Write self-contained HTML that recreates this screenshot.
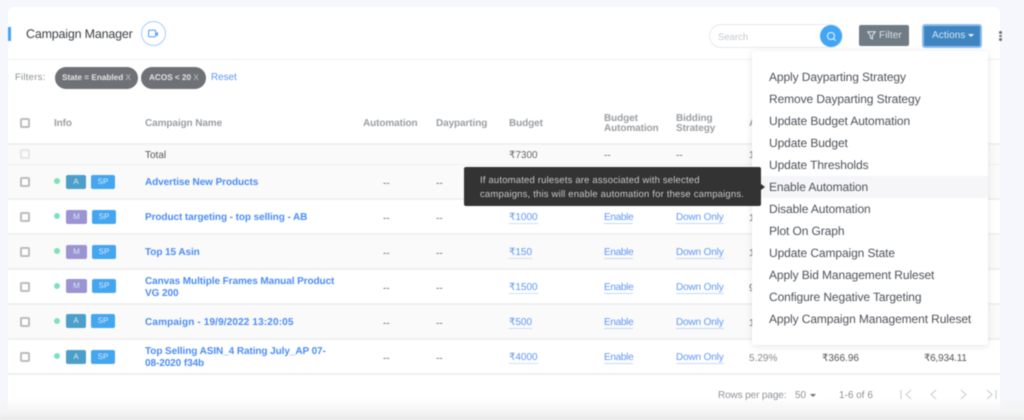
<!DOCTYPE html>
<html><head><meta charset="utf-8">
<style>
html,body{margin:0;padding:0;width:1024px;height:420px;overflow:hidden;background:#f6f7fc;font-family:"Liberation Sans",sans-serif;text-rendering:geometricPrecision}
#w{position:relative;width:1024px;height:420px;overflow:hidden;filter:blur(.4px)}
#w div,#w span.t{position:absolute;box-sizing:border-box}
.t{white-space:nowrap;line-height:14px;height:14px}
.h{font-size:10px;font-weight:bold;color:#9a9ea3;margin-top:2px;letter-spacing:-.1px}
.d{font-size:10px;color:#666;margin-top:2px}
.n{font-size:10px;font-weight:bold;color:#4a8cf5;margin-top:2px;letter-spacing:-.08px}
.l{font-size:10px;color:#5f97f5;line-height:12px!important;height:12px!important;margin-top:1px;border-bottom:1px dotted #9fc3f8}
.e{border-bottom:1px solid #c3dafa}
.en{letter-spacing:-.3px}
.c{width:10px;height:10px;border:2px solid #bcbcbc;border-radius:2px;left:20px;background:#fff;margin-top:-.5px}
.r{left:8px;width:992px;height:35px;border-bottom:2px solid #f0f0f0}
.g{background:#fafafa}
.dot{left:54px;width:6px;height:6px;border-radius:50%;background:#7ce3b9}
.b{height:14px;border-radius:2px;color:#d9e6f5;font-size:8px;line-height:14px;text-align:center}
.A{left:66px;width:20px;background:#4b9fc9}
.M{left:66px;width:21px;background:#9a94d2}
.S{left:91px;width:24px;background:#45a6f0}
.S2{left:92px}
.m{left:769px;font-size:12px;color:#4d5258;letter-spacing:-.1px;margin-top:-.5px}
.f{font-size:10px;color:#8e9297;margin-top:1px}
</style></head><body><div id="w">

<div style="left:8px;top:7px;width:992px;height:410px;background:#fff;border-radius:5px 5px 0 0"></div>
<div style="left:0;top:398px;width:1024px;height:22px;background:linear-gradient(to bottom,rgba(240,240,240,0),#f3f3f3 70%,#e9e9e9)"></div>

<div style="left:8px;top:27px;width:3px;height:14px;background:#45a6f5"></div>
<span class="t" style="left:26px;top:27px;font-size:12.500px;color:#3c4044;letter-spacing:-.2px">Campaign Manager</span>
<div style="left:141px;top:21px;width:25px;height:25px;border:1px solid #a8cdfa;border-radius:50%"></div>
<svg style="position:absolute;left:148px;top:29px" width="11" height="10" viewBox="0 0 11 10"><rect x=".6" y="1.2" width="7" height="6.6" rx="1" fill="none" stroke="#5ba5f5" stroke-width="1.1"/><path d="M8 4l2-1.2v4.400L8 6z" fill="#5ba5f5"/></svg>

<!-- search -->
<div style="left:709px;top:24px;width:134px;height:24px;border:1px solid #e7e9ee;border-radius:12px;background:#fff"></div>
<span class="t" style="left:718px;top:29px;font-size:9.500px;color:#c5c8cc;margin-top:2px">Search</span>
<div style="left:820px;top:25px;width:22px;height:22px;border-radius:50%;background:#42a5f5"></div>
<svg style="position:absolute;left:826px;top:31px" width="11" height="11" viewBox="0 0 11 11"><circle cx="5" cy="5" r="3.500" fill="none" stroke="#e6f3fe" stroke-width="1.100"/><path d="M7.600 7.600l2 2" stroke="#e6f3fe" stroke-width="1.100"/></svg>

<!-- Filter -->
<div style="left:859px;top:25px;width:50px;height:21px;background:#6f7b85;border-radius:2px"></div>
<svg style="position:absolute;left:867px;top:31px" width="9" height="9" viewBox="0 0 9 9"><path d="M.7.8h7.600L5.500 4.400v3.500l-2-1V4.400z" fill="none" stroke="#e4e7ea" stroke-width="1"/></svg>
<span class="t" style="left:879px;top:29px;font-size:10px;color:#dfe3e6;letter-spacing:.1px">Filter</span>

<!-- Actions -->
<div style="left:922px;top:24px;width:60px;height:24px;background:#3f85c1;border:2px solid #8dbdf3;border-radius:3px"></div>
<span class="t" style="left:932px;top:29px;font-size:10px;color:#d8e7f5;letter-spacing:.1px">Actions</span>
<div style="left:968px;top:34px;width:0;height:0;border-left:3px solid transparent;border-right:3px solid transparent;border-top:3px solid #eef5fb"></div>

<!-- kebab -->
<div style="left:999px;top:31px;width:3px;height:2.500px;background:#6a6d70;border-radius:50%"></div>
<div style="left:999px;top:34.500px;width:3px;height:2.500px;background:#6a6d70;border-radius:50%"></div>
<div style="left:999px;top:38px;width:3px;height:2.500px;background:#6a6d70;border-radius:50%"></div>

<div style="left:8px;top:59px;width:992px;height:1px;background:#f1f1f3"></div>

<!-- filters -->
<span class="t" style="left:15px;top:71px;font-size:9.500px;color:#8c9095;letter-spacing:.25px">Filters:</span>
<div style="left:55px;top:67px;width:83px;height:22px;border-radius:11px;background:#6e7276"></div>
<span class="t" style="left:62px;top:71px;font-size:8.200px;font-weight:bold;color:#e2e3e4">State = Enabled <span style="font-weight:normal;color:#c5c6c8">X</span></span>
<div style="left:141px;top:67px;width:65px;height:22px;border-radius:11px;background:#6e7276"></div>
<span class="t" style="left:149px;top:71px;font-size:8.200px;font-weight:bold;color:#e2e3e4">ACOS &lt; 20 <span style="font-weight:normal;color:#c5c6c8">X</span></span>
<span class="t" style="left:211px;top:71px;font-size:10px;color:#5f97f5;letter-spacing:-.1px">Reset</span>

<!-- table header -->
<div class="c" style="top:118px"></div>
<span class="t h" style="left:54px;top:115px">Info</span>
<span class="t h" style="left:145px;top:115px">Campaign Name</span>
<span class="t h" style="left:363px;top:115px">Automation</span>
<span class="t h" style="left:436px;top:115px">Dayparting</span>
<span class="t h" style="left:509px;top:115px">Budget</span>
<span class="t h" style="left:604px;top:110px">Budget</span>
<span class="t h" style="left:604px;top:120px">Automation</span>
<span class="t h" style="left:676px;top:110px">Bidding</span>
<span class="t h" style="left:676px;top:120px">Strategy</span>
<span class="t h" style="left:749px;top:115px">ACOS</span>

<!-- rows -->
<div style="left:8px;top:143px;width:992px;height:23px;background:#fafafa;border-top:2px solid #f0f0f0;border-bottom:2px solid #f0f0f0"></div>
<div class="r g" style="top:165px"></div>
<div class="r" style="top:200px"></div>
<div class="r g" style="top:235px"></div>
<div class="r" style="top:270px"></div>
<div class="r g" style="top:305px"></div>
<div class="r" style="top:340px"></div>

<!-- total -->
<div class="c" style="top:149px;border-color:#e6e6e6;background:#fafafa"></div>
<span class="t d" style="left:145px;top:147px;color:#555">Total</span>
<span class="t d" style="left:509px;top:147px">₹7300</span>
<span class="t d" style="left:604px;top:147px">--</span>
<span class="t d" style="left:676px;top:147px">--</span>
<span class="t d" style="left:749px;top:147px">1</span>

<!-- row1 -->
<div class="c" style="top:177px"></div><div class="dot" style="top:178px"></div>
<div class="b A" style="top:175px">A</div><div class="b S" style="top:175px">SP</div>
<span class="t n" style="left:145px;top:174px">Advertise New Products</span>
<span class="t d" style="left:383px;top:175px">--</span><span class="t d" style="left:436px;top:175px">--</span>
<span class="t d" style="left:749px;top:175px">1</span>

<!-- row2 -->
<div class="c" style="top:212px"></div><div class="dot" style="top:213px"></div>
<div class="b M" style="top:210px">M</div><div class="b S S2" style="top:210px">SP</div>
<span class="t n" style="left:145px;top:209px">Product targeting - top selling - AB</span>
<span class="t d" style="left:383px;top:210px">--</span><span class="t d" style="left:436px;top:210px">--</span>
<span class="t l" style="left:509px;top:211px">₹1000</span>
<span class="t l e en" style="left:604px;top:211px">Enable</span>
<span class="t l e" style="left:676px;top:211px;letter-spacing:-.15px">Down Only</span>
<span class="t d" style="left:749px;top:210px">1</span>

<!-- row3 -->
<div class="c" style="top:247px"></div><div class="dot" style="top:248px"></div>
<div class="b M" style="top:245px">M</div><div class="b S S2" style="top:245px">SP</div>
<span class="t n" style="left:145px;top:244px">Top 15 Asin</span>
<span class="t d" style="left:383px;top:245px">--</span><span class="t d" style="left:436px;top:245px">--</span>
<span class="t l" style="left:509px;top:246px">₹150</span>
<span class="t l e en" style="left:604px;top:246px">Enable</span>
<span class="t l e" style="left:676px;top:246px;letter-spacing:-.15px">Down Only</span>
<span class="t d" style="left:749px;top:245px">1</span>

<!-- row4 -->
<div class="c" style="top:282px"></div><div class="dot" style="top:283px"></div>
<div class="b M" style="top:279px">M</div><div class="b S S2" style="top:279px">SP</div>
<span class="t n" style="left:145px;top:273px">Canvas Multiple Frames Manual Product</span>
<span class="t n" style="left:145px;top:285px">VG 200</span>
<span class="t d" style="left:383px;top:280px">--</span><span class="t d" style="left:436px;top:280px">--</span>
<span class="t l" style="left:509px;top:281px">₹1500</span>
<span class="t l e en" style="left:604px;top:281px">Enable</span>
<span class="t l e" style="left:676px;top:281px;letter-spacing:-.15px">Down Only</span>
<span class="t d" style="left:749px;top:280px">9</span>

<!-- row5 -->
<div class="c" style="top:317px"></div><div class="dot" style="top:318px"></div>
<div class="b A" style="top:314px">A</div><div class="b S" style="top:314px">SP</div>
<span class="t n" style="left:145px;top:314px;letter-spacing:.14px">Campaign - 19/9/2022 13:20:05</span>
<span class="t d" style="left:383px;top:315px">--</span><span class="t d" style="left:436px;top:315px">--</span>
<span class="t l" style="left:509px;top:316px">₹500</span>
<span class="t l e en" style="left:604px;top:316px">Enable</span>
<span class="t l e" style="left:676px;top:316px;letter-spacing:-.15px">Down Only</span>
<span class="t d" style="left:749px;top:315px">1</span>

<!-- row6 -->
<div class="c" style="top:352px"></div><div class="dot" style="top:353px"></div>
<div class="b A" style="top:350px">A</div><div class="b S" style="top:350px">SP</div>
<span class="t n" style="left:145px;top:343px">Top Selling ASIN_4 Rating July_AP 07-</span>
<span class="t n" style="left:145px;top:355px">08-2020 f34b</span>
<span class="t d" style="left:383px;top:350px">--</span><span class="t d" style="left:436px;top:350px">--</span>
<span class="t l" style="left:509px;top:351px">₹4000</span>
<span class="t l e en" style="left:604px;top:351px">Enable</span>
<span class="t l e" style="left:676px;top:351px;letter-spacing:-.15px">Down Only</span>
<span class="t d" style="left:749px;top:350px;color:#888">5.29%</span>
<span class="t d" style="left:822px;top:350px;color:#555">₹366.96</span>
<span class="t d" style="left:924px;top:350px;color:#555;letter-spacing:-.2px">₹6,934.11</span>

<!-- footer -->
<span class="t f" style="left:718px;top:388px;letter-spacing:-.12px">Rows per page:</span>
<span class="t f" style="left:795px;top:388px">50</span>
<div style="left:810px;top:394px;width:0;height:0;border-left:3px solid transparent;border-right:3px solid transparent;border-top:3px solid #6d7074"></div>
<span class="t f" style="left:839px;top:388px">1-6 of 6</span>
<svg style="position:absolute;left:899px;top:388px" width="100" height="14" viewBox="0 0 100 14" fill="none" stroke="#c9ccd0" stroke-width="1.100"><path d="M2 2v9M12 2L7 6.500 12 11"/><path d="M37 2L32 6.500 37 11"/><path d="M62 2L67 6.500 62 11"/><path d="M88 2L93 6.500 88 11M97 2v9"/></svg>

<!-- menu -->
<div style="left:752px;top:51px;width:236px;height:294px;background:#fff;border-radius:3px;box-shadow:0 1px 8px rgba(0,0,0,.11)"></div>
<div style="left:752px;top:176px;width:236px;height:22px;background:#f6f6f8"></div>
<span class="t m" style="top:70px">Apply Dayparting Strategy</span>
<span class="t m" style="top:92px">Remove Dayparting Strategy</span>
<span class="t m" style="top:114px">Update Budget Automation</span>
<span class="t m" style="top:136px">Update Budget</span>
<span class="t m" style="top:158px">Update Thresholds</span>
<span class="t m" style="top:180px">Enable Automation</span>
<span class="t m" style="top:202px">Disable Automation</span>
<span class="t m" style="top:224px">Plot On Graph</span>
<span class="t m" style="top:246px">Update Campaign State</span>
<span class="t m" style="top:268px">Apply Bid Management Ruleset</span>
<span class="t m" style="top:290px">Configure Negative Targeting</span>
<span class="t m" style="top:312px">Apply Campaign Management Ruleset</span>

<!-- tooltip -->
<div style="left:464px;top:167px;width:297px;height:39px;background:#333;border-radius:2px"></div>
<div style="left:761px;top:184px;width:0;height:0;border-top:3px solid transparent;border-bottom:3px solid transparent;border-left:4px solid #333"></div>
<span class="t" style="left:480px;top:173px;font-size:9.500px;color:#c9c9c9;letter-spacing:.18px;margin-top:.5px">If automated rulesets are associated with selected</span>
<span class="t" style="left:480px;top:187px;font-size:9.500px;color:#c9c9c9;letter-spacing:.18px;margin-top:.5px">campaigns, this will enable automation for these campaigns.</span>

</div></body></html>
